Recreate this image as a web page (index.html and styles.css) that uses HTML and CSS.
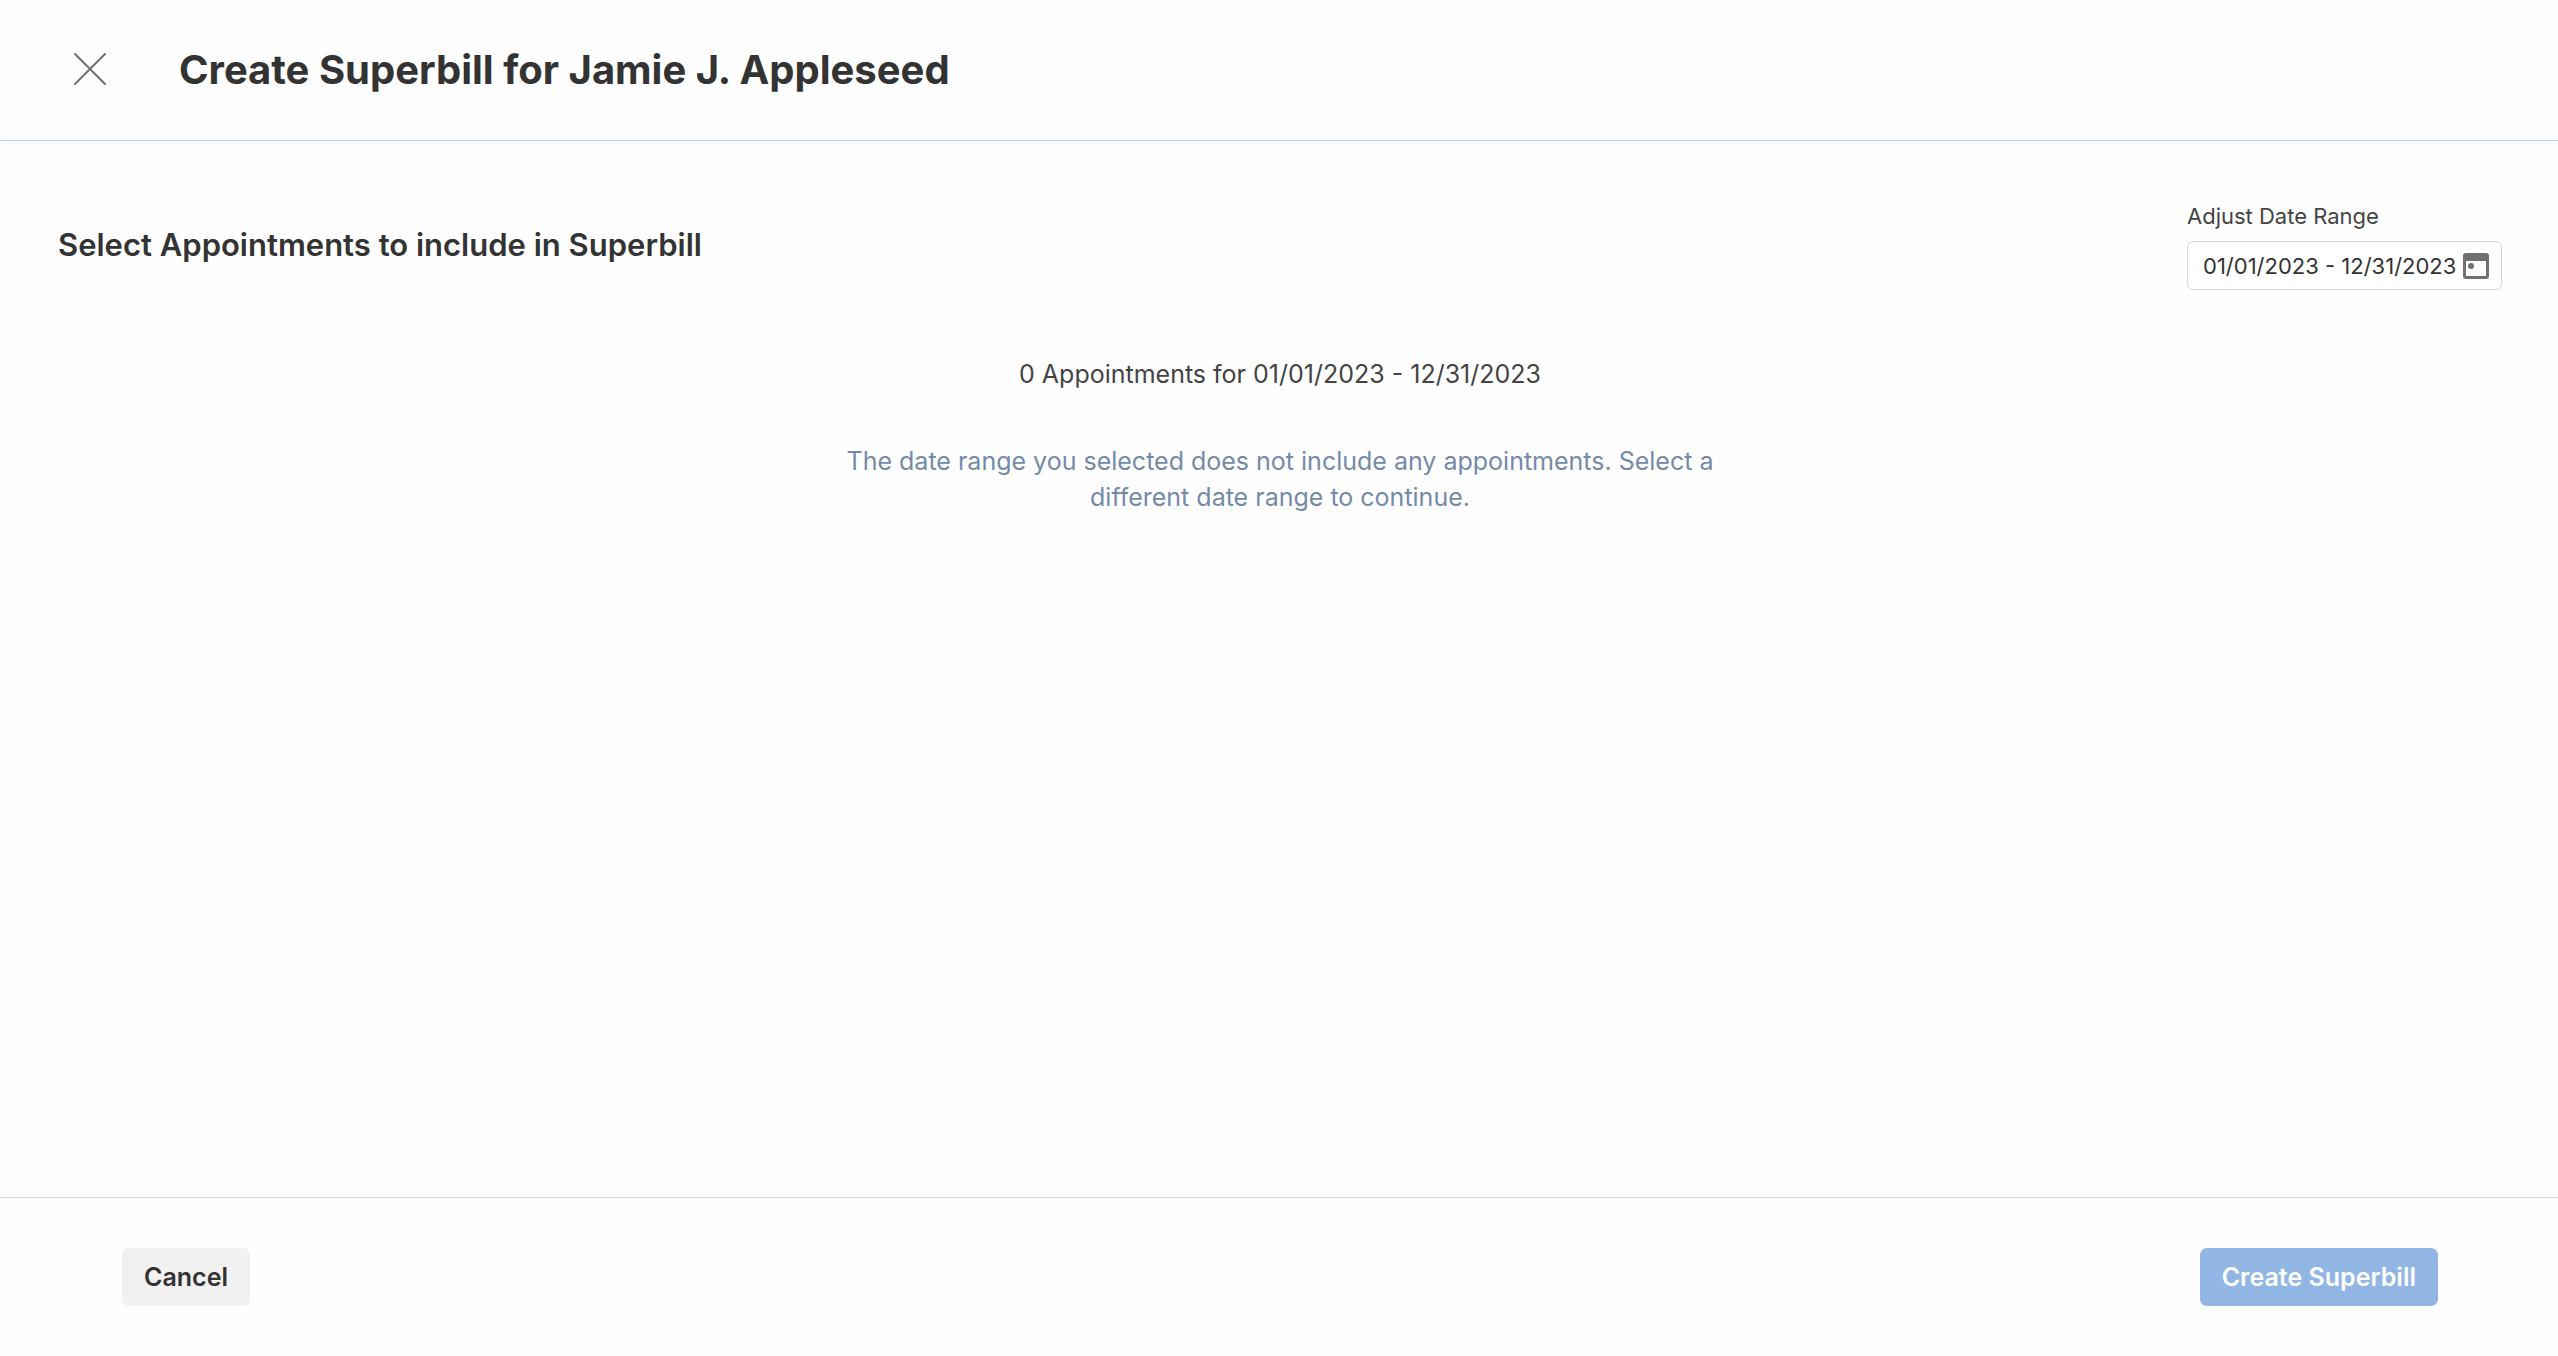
FILE: index.html
```html
<!DOCTYPE html>
<html lang="en">
  <head>
    <meta charset="utf-8">
    <title>Create Superbill</title>
    <link rel="stylesheet" href="styles.css">
  </head>
  <body>
    <header class="topbar">
      <button class="close" type="button" aria-label="Close">
        <svg width="34" height="34" viewBox="0 0 34 34">
          <path d="M2 2 L32 32 M32 2 L2 32"/>
        </svg>
      </button>
      <h1 class="title">Create Superbill for Jamie J. Appleseed</h1>
    </header>

    <main class="content">
      <div class="toolbar">
        <h2 class="heading">Select Appointments to include in Superbill</h2>
        <div class="field">
          <label for="date-range">Adjust Date Range</label>
          <div class="datebox">
            <input id="date-range" type="text" value="01/01/2023 - 12/31/2023">
            <svg class="calendar" width="26" height="26" viewBox="0 0 26 26">
              <path fill-rule="evenodd" d="M3 0 H23 Q26 0 26 3 V23 Q26 26 23 26 H3 Q0 26 0 23 V3 Q0 0 3 0 Z M3 8 V23 H23 V8 Z"/>
              <circle cx="8" cy="13" r="3"/>
            </svg>
          </div>
        </div>
      </div>

      <p class="count">0 Appointments for 01/01/2023 - 12/31/2023</p>
      <p class="empty">The date range you selected does not include any appointments. Select a different date range to continue.</p>
    </main>

    <footer class="actions">
      <button class="btn" type="button">Cancel</button>
      <button class="btn primary" type="button" disabled>Create Superbill</button>
    </footer>
  </body>
</html>
```
FILE: styles.css
```css
* {
  box-sizing: border-box;
}
body {
  margin: 0;
  min-height: 100vh;
  display: flex;
  flex-direction: column;
  font-family: Inter, "Liberation Sans", sans-serif;
  font-size: 25px;
  color: #444;
  background: #fefefe;
}
h1, h2, p {
  margin: 0;
}
button, input {
  font: inherit;
  color: inherit;
}

.topbar {
  display: flex;
  align-items: center;
  gap: 72px;
  height: 141px;
  padding: 0 73px 2px;
  border-bottom: 1px solid #c5cfe2;
  box-shadow: 0 8px 20px -8px rgba(60, 80, 120, 0.07);
}
.close {
  display: flex;
  padding: 0;
  border: 0;
  background: none;
  cursor: pointer;
}
.close path {
  fill: none;
  stroke: #707070;
  stroke-width: 2;
  stroke-linecap: round;
}
.title {
  font-size: 40px;
  font-weight: 700;
  color: #333;
}

.content {
  flex: 1;
  padding: 60px 56px 60px 58px;
}
.toolbar {
  display: flex;
  justify-content: space-between;
  align-items: center;
}
.heading {
  padding-bottom: 2px;
  font-size: 31px;
  font-weight: 600;
  color: #333;
}
.field {
  display: flex;
  flex-direction: column;
  gap: 10px;
}
.field label {
  font-size: 22px;
  line-height: 30px;
}
.datebox {
  display: flex;
  align-items: center;
  width: 315px;
  height: 49px;
  padding: 0 12px 0 15px;
  border: 1px solid #d8d8d8;
  border-radius: 6px;
  background: #fff;
}
.datebox input {
  flex: 1;
  min-width: 0;
  padding: 0;
  border: 0;
  outline: 0;
  background: none;
  font-size: 22px;
  color: #333;
}
.calendar {
  fill: #707070;
}

.count, .empty {
  line-height: 36px;
  text-align: center;
}
.count {
  margin-top: 66px;
}
.empty {
  max-width: 900px;
  margin: 51px auto 0;
  color: #748aa8;
}

.actions {
  display: flex;
  justify-content: space-between;
  padding: 50px 120px 50px 122px;
  border-top: 1px solid #d8d8d8;
}
.btn {
  height: 58px;
  padding: 0 22px;
  border: 0;
  border-radius: 7px;
  background: #f1f1f1;
  color: #333;
  font-weight: 600;
}
.primary {
  background: #92b6e4;
  color: #fff;
}
```
